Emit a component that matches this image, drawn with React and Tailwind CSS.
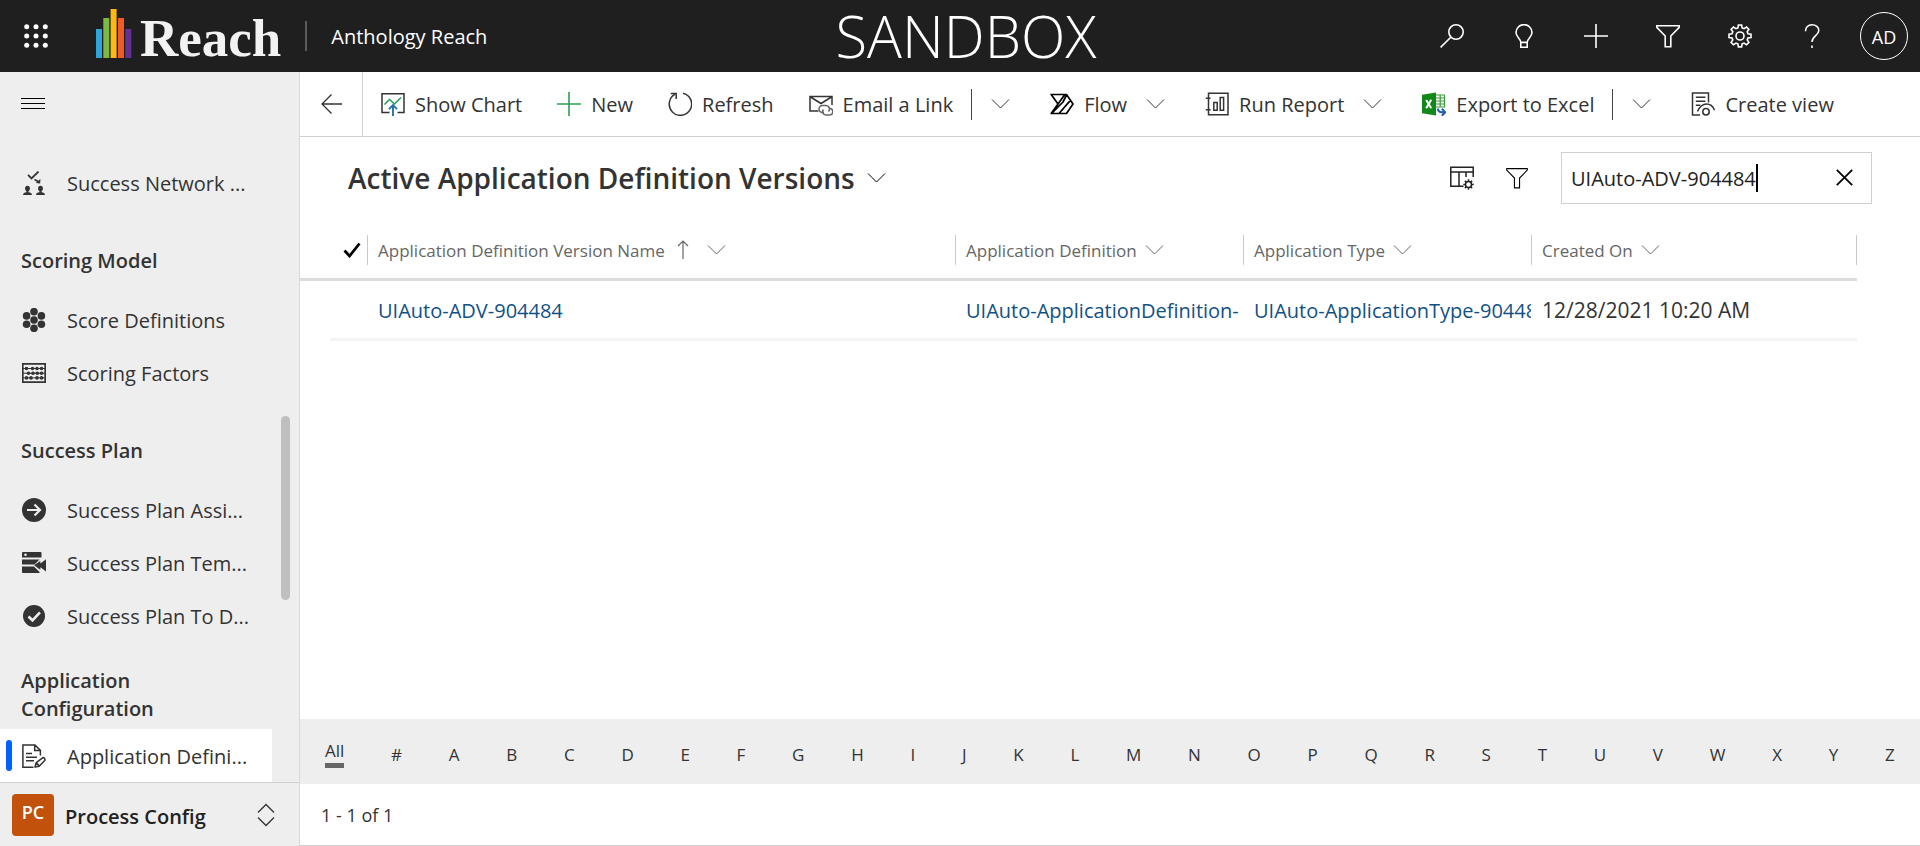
import React from "react";

function Svg({ children, size = 24, className = "", stroke = 1.5, vb = "0 0 24 24" }) {
  return (
    <svg
      width={size}
      height={size}
      viewBox={vb}
      fill="none"
      stroke="currentColor"
      strokeWidth={stroke}
      className={"shrink-0 " + className}
      aria-hidden="true"
    >
      {children}
    </svg>
  );
}

function Chevron({ className = "" }) {
  return (
    <svg width="19" height="12" viewBox="0 0 19 12" fill="none" stroke="currentColor" strokeWidth="1" className={"shrink-0 " + className} aria-hidden="true">
      <path d="M1 1.5 9.5 10 18 1.5" />
    </svg>
  );
}

/* ---------- header icons ---------- */
const SearchIcon = () => (
  <Svg stroke={1.6}>
    <circle cx="16" cy="8" r="7.2" />
    <path d="M10.8 13.2.6 23.4" />
  </Svg>
);
const BulbIcon = () => (
  <Svg stroke={1.6}>
    <path d="M8.8 18.4c0-3.600-4.800-5.400-4.800-9.800a8 8 0 0 1 16 0c0 4.400-4.800 6.200-4.800 9.800zM8.800 18.400v4.800h6.400v-4.800" />
  </Svg>
);
const PlusIcon = ({ className }) => (
  <Svg className={className} stroke={1.6}>
    <path d="M12 0v24M0 12h24" />
  </Svg>
);
const FunnelIcon = ({ size = 24, stroke = 1.6 }) => (
  <Svg size={size} stroke={stroke}>
    <path d="M.8 1.800h22.400v1.600L14.800 12v10.800H9.200V12L.8 3.400z" />
  </Svg>
);
const GearIcon = ({ size = 24, stroke = 1.6 }) => (
  <Svg size={size} stroke={stroke}>
    <circle cx="12" cy="12" r="4" />
    <path d="M10.400 1h3.200l.5 2.900 2 .8 2.400-1.700 2.400 2.300-1.700 2.400.8 2 3 .5v3.300l-3 .5-.8 2 1.700 2.400-2.400 2.400-2.400-1.700-2 .8-.5 3h-3.200l-.5-3-2-.8-2.400 1.700-2.400-2.400 1.700-2.400-.8-2-3-.5v-3.300l3-.5.8-2-1.700-2.400L5.500 3l2.400 1.700 2-.8z" />
  </Svg>
);
const HelpIcon = () => (
  <Svg stroke={1.6}>
    <path d="M5.500 7.200C5.500 3.300 8.200.8 12 .8s6.800 2.400 6.800 5.800c0 4.800-6.800 5.600-6.800 11.400M12 21.600V24" />
  </Svg>
);

/* ---------- command icons ---------- */
const ChartIcon = () => (
  <Svg>
    <path d="M8.500 20.500H1V1.800h22v18.700h-6.500" />
    <path d="m3.500 12.500 5-5 5 4.500 6.500-6.500" stroke="#1d9e52" />
    <path d="M12 24V13.500M8 17.200l4-4 4 4" stroke="#1f72a8" strokeWidth="1.9" />
  </Svg>
);
const RefreshIcon = () => (
  <Svg>
    <path d="M15 1.200A11.200 11.200 0 1 1 7.200 2.200" />
    <path d="M2.800 1.400h5.400V7" />
  </Svg>
);
const MailIcon = () => (
  <Svg>
    <path d="M9.500 19H1V4.500h22V13M1.500 5 12 11.500 22.500 5" />
    <g stroke="#666" strokeWidth="1.600">
      <path d="M15 20.500h-1.500a3.500 3.500 0 0 1 0-7H17a3.500 3.500 0 0 1 2.500 6" />
      <path d="M20 16.500h.6a3.200 3.200 0 0 1 0 6.500h-3.800a3.200 3.200 0 0 1-2.300-5.400" />
    </g>
  </Svg>
);
const FlowIcon = () => (
  <Svg stroke={1.7} className="text-black">
    <path d="M1.200 2.500h15.300L23 12l-6.500 9.500H1.200L8 12zM8 12l6.500-9M1.800 21.200 13 10l3.500-7M9.200 21.200 20.400 8.400" strokeLinejoin="round" />
  </Svg>
);
const ReportIcon = () => (
  <Svg>
    <path d="M3.500 4.500V1.200H23v21.600H3.500v-3.300M3.500 7.800v8.400M.8 6.200h4.800M.8 17.800h4.800M3.500 4.500v3.300M3.500 16.200v3.300" />
    <path d="M8.800 10.500h3.400v7.800H8.800zM15.200 5.500h3.400v12.800h-3.400z" />
  </Svg>
);
const ExcelIcon = () => (
  <Svg stroke={1.200}>
    <path d="M14 3h8.500v12H14" stroke="#3a9a3a" fill="#fff" />
    <path d="M14 6h8.500M14 9h8.500M14 12h8.500M18.200 3v12" stroke="#3a9a3a" />
    <path d="M0 2.800 14 .4v23.200L0 21.200z" fill="#12881a" stroke="none" />
    <path d="m4.200 8 5 8.200M9.200 7.800l-5 8.400" stroke="#fff" strokeWidth="2" />
    <path d="M16 16.500c0 2.800 1.500 3.800 4 3.800h2.800M19.800 16.800l3.400 3.500-3.400 3.500" stroke="#1f5fa8" strokeWidth="2" />
  </Svg>
);
const CreateViewIcon = () => (
  <Svg>
    <path d="M9 23H1.500V1h16v9.500M4.800 5.200h9.600M4.800 9.200h9.600M4.800 13.200h4.500" />
    <path d="M6.500 19.500C9 14 12.500 12 15.500 12c3.500 0 6.500 2 8 6.200" />
    <circle cx="15" cy="19.800" r="3.200" />
  </Svg>
);
const ColumnsIcon = () => (
  <Svg className="text-[#222]">
    <path d="M13.500 20.200H.8V1.200h22.400V11M.8 6h22.400M9 6v14M16 6v5" />
    <circle cx="18.500" cy="18.500" r="3" />
    <path d="M18.500 13.300v2.200M18.500 21.500v2.200M13.300 18.500h2.200M21.500 18.500h2.200M14.900 14.900l1.500 1.500M20.600 20.600l1.500 1.500M14.900 22.100l1.500-1.500M20.600 16.400l1.500-1.500" />
  </Svg>
);

/* ---------- navigation icons ---------- */
const NetworkIcon = () => (
  <Svg>
    <path d="m6 3.800 3.500 3.600L16.500.5" strokeWidth="1.800" />
    <path d="M12.500 8.500 17 11" />
    <g fill="currentColor" stroke="none">
      <path d="m18.400 8-.2 4.600-4.400-.6z" />
      <ellipse cx="5.500" cy="17.400" rx="2.400" ry="2.700" />
      <ellipse cx="18.500" cy="17.400" rx="2.400" ry="2.700" />
      <path d="M1 24c0-1.800 1.500-2.600 3.400-2.800V19h2.200v2.200C8.500 21.400 10 22.200 10 24zM14 24c0-1.800 1.500-2.600 3.400-2.800V19h2.200v2.200c1.900.2 3.400 1 3.400 2.800z" />
    </g>
  </Svg>
);
const HoneycombIcon = () => (
  <Svg>
    <g fill="currentColor" stroke="none">
      {[[12, 3.700], [12, 12], [12, 20.300], [4.600, 7.900], [19.400, 7.900], [4.600, 16.200], [19.400, 16.200]].map(([x, y]) => (
        <circle key={x + "-" + y} cx={x} cy={y} r="3.800" />
      ))}
    </g>
  </Svg>
);
const AbacusIcon = () => (
  <Svg>
    <path d="M1 7.500h22M1 12.200h22M1 16.900h22" strokeWidth="1" />
    <path d="M.8 2.800h22.400v18.400H.8z" strokeWidth="1.700" />
    <g fill="currentColor" stroke="none">
      {[[4.500, 7.500], [10.500, 7.500], [15, 7.500], [19.500, 7.500], [6.500, 12.200], [11, 12.200], [15.300, 12.200], [19.500, 12.200], [4.500, 16.900], [9, 16.900], [15, 16.900], [19.500, 16.900]].map(([x, y]) => (
        <circle key={x + "-" + y} cx={x} cy={y} r="1.800" />
      ))}
    </g>
  </Svg>
);
const ArrowCircleIcon = () => (
  <Svg>
    <circle cx="12" cy="12" r="12" fill="currentColor" stroke="none" />
    <path d="M5 12h13M12.500 6.500 18 12l-5.500 5.500" stroke="#eee" strokeWidth="2.200" />
  </Svg>
);
const TemplateIcon = () => (
  <Svg>
    <g fill="currentColor" stroke="none">
      <path d="M1 1h17.500q1 0 1 1v4.500H0V2q0-1 1-1z" />
      <path d="M0 8.500h17.500l-5 5H0zM0 15.500h12l5.500 5.500V22H1q-1 0-1-1z" />
      <path d="m24 8.200-5.500 4.200-.3-2.500-6 4.400 6 4.400.3-2.500 5.500 4.200z" />
      <circle cx="3.500" cy="3.800" r="1.300" fill="#eee" />
    </g>
  </Svg>
);
const CheckCircleIcon = () => (
  <Svg>
    <circle cx="12" cy="12" r="11" fill="currentColor" stroke="none" />
    <path d="m6.500 12.500 4 3.800 7.500-8" stroke="#eee" strokeWidth="2.600" />
  </Svg>
);
const DocEditIcon = () => (
  <Svg>
    <path d="M11.500 23.200H.9V.9h12l5.500 5.500v5.100M12.700 1v5.600h5.600M4 9.500h6M4 13.200h11M4 16.800h8" />
    <path d="m13 23 1.200-4.400 6.800-5q2 .2 2 2.600l-5.800 6zM14.500 18.800l2.700 3.200" strokeLinejoin="round" />
  </Svg>
);

const NAV = [
  { items: [{ label: "Success Network ...", Icon: NetworkIcon }] },
  {
    title: "Scoring Model",
    items: [
      { label: "Score Definitions", Icon: HoneycombIcon },
      { label: "Scoring Factors", Icon: AbacusIcon },
    ],
  },
  {
    title: "Success Plan",
    items: [
      { label: "Success Plan Assi...", Icon: ArrowCircleIcon },
      { label: "Success Plan Tem...", Icon: TemplateIcon },
      { label: "Success Plan To D...", Icon: CheckCircleIcon },
    ],
  },
  {
    title: "Application Configuration",
    items: [{ label: "Application Defini...", Icon: DocEditIcon, active: true }],
  },
];

const HEADER_ACTIONS = [
  ["Search", SearchIcon],
  ["Assistant", BulbIcon],
  ["Quick create", PlusIcon],
  ["Advanced find", FunnelIcon],
  ["Settings", GearIcon],
  ["Help", HelpIcon],
];

const LETTERS = ["All", "#", ..."ABCDEFGHIJKLMNOPQRSTUVWXYZ"];

function Header() {
  return (
    <header className="flex h-[72px] shrink-0 items-center bg-[#1f1f1f] text-white">
      <div className="flex flex-1 items-center">
        <button type="button" aria-label="App launcher" className="flex w-[72px] justify-center">
          <svg width="24" height="24" viewBox="0 0 24 24" fill="currentColor" aria-hidden="true">
            {[2.700, 12, 21.300].map((y) => [2.700, 12, 21.300].map((x) => <circle key={x + "-" + y} cx={x} cy={y} r="2.500" />))}
          </svg>
        </button>
        <a href="#home" className="ml-6 flex items-center gap-2">
          <svg width="36" height="50" viewBox="0 0 36 50" className="mb-1" aria-hidden="true">
            <rect x="0" y="20" width="6" height="29" fill="#2fa4d9" />
            <rect x="7.300" y="9" width="6" height="40" fill="#7cba43" />
            <rect x="14.600" y="0" width="6" height="49" fill="#fdb813" />
            <rect x="22" y="9" width="6" height="40" fill="#f05a28" />
            <rect x="29.300" y="20" width="6" height="29" fill="#66308f" />
          </svg>
          <span className="pt-1 font-['Liberation_Serif',serif] text-[53px] leading-[64px] font-bold text-[#f2f2f2]">Reach</span>
        </a>
        <span className="ml-6 h-[30px] w-0.5 bg-[#5c5c5c]" />
        <span className="ml-6 pt-0.5 text-[20px] leading-7">Anthology Reach</span>
      </div>
      <div className="pl-3 text-[58px] leading-[72px] font-light">SANDBOX</div>
      <div className="flex flex-1 items-center justify-end">
        {HEADER_ACTIONS.map(([label, Icon]) => (
          <button key={label} type="button" aria-label={label} className="flex h-[68px] w-[72px] items-center justify-center">
            <Icon />
          </button>
        ))}
        <button type="button" aria-label="Account" className="flex w-[72px] justify-center">
          <span className="flex size-12 items-center justify-center rounded-full border border-white pt-0.5 text-[18px] font-medium">AD</span>
        </button>
      </div>
    </header>
  );
}

function Sidebar() {
  return (
    <aside className="flex w-[300px] shrink-0 flex-col border-r border-[#d8d8d8] bg-[#eee] text-[#333]">
      <div className="flex h-[84px] shrink-0 items-start">
        <button type="button" aria-label="Toggle navigation" className="ml-[21px] mt-[26px] text-black">
          <svg width="24" height="12" viewBox="0 0 24 12" stroke="currentColor" strokeWidth="1" aria-hidden="true">
            <path d="M0 .5h24M0 5.500h24M0 10.500h24" />
          </svg>
        </button>
      </div>
      <nav className="relative min-h-0 flex-1 overflow-hidden">
        {NAV.map((group) => (
          <section key={group.title || "top"}>
            {group.title && (
              <h2 className="flex min-h-[84px] w-[220px] items-center pt-[25px] pb-1.5 pl-[21px] text-[20px] leading-7 font-semibold">{group.title}</h2>
            )}
            {group.items.map(({ label, Icon, active }) => (
              <a
                key={label}
                href="#nav"
                className={
                  active
                    ? "relative mr-[27px] flex h-[53px] items-center gap-[21px] bg-white pl-[22px] text-[20px]"
                    : "mr-[27px] flex h-[53px] items-center gap-[21px] pl-[22px] text-[20px]"
                }
              >
                {active && <span className="absolute left-1.5 h-[31px] w-1.5 rounded-sm bg-[#0062ff]" />}
                <Icon />
                <span className="pt-0.5 whitespace-nowrap">{label}</span>
              </a>
            ))}
          </section>
        ))}
        <div className="absolute top-[260px] right-[9px] h-[184px] w-[9px] rounded-full bg-[#bfbfbf]" />
      </nav>
      <button type="button" className="flex h-16 shrink-0 items-center border-t border-[#cfcfcf] pr-6 pl-3 text-left">
        <span className="flex size-[42px] items-center justify-center rounded bg-[#c2510c] pb-1 text-[18px] font-semibold text-white">PC</span>
        <span className="ml-[11px] flex-1 pt-1 text-[20px] font-semibold text-[#222]">Process Config</span>
        <svg width="18" height="24" viewBox="0 0 18 24" fill="none" stroke="currentColor" strokeWidth="1.300" aria-hidden="true">
          <path d="M1 9.500 9 1.500l8 8M1 14.500l8 8 8-8" />
        </svg>
      </button>
    </aside>
  );
}

function Command({ icon, label }) {
  return (
    <button type="button" className="flex items-center gap-2.5 whitespace-nowrap">
      {icon}
      <span className="pt-0.5">{label}</span>
    </button>
  );
}

function MenuChevron({ label }) {
  return (
    <button type="button" aria-label={label} className="mr-[5px] ml-[19px] flex">
      <Chevron />
    </button>
  );
}

function CommandBar() {
  return (
    <div className="flex h-[65px] shrink-0 items-stretch border-b border-[#d0d0d0] text-[20px] text-[#333]">
      <button type="button" aria-label="Back" className="flex w-[63px] shrink-0 items-center justify-center border-r border-[#d0d0d0]">
        <svg width="21" height="20" viewBox="0 0 21 20" fill="none" stroke="currentColor" strokeWidth="1.300" aria-hidden="true">
          <path d="M21 10H1M10.500.5 1 10l9.500 9.500" />
        </svg>
      </button>
      <div className="flex items-center gap-[35px] pl-[18px]">
        <Command icon={<ChartIcon />} label="Show Chart" />
        <Command icon={<PlusIcon className="text-[#2e9e55]" />} label="New" />
        <Command icon={<RefreshIcon />} label="Refresh" />
        <div className="flex items-center">
          <Command icon={<MailIcon />} label="Email a Link" />
          <span className="ml-[18px] h-[31px] w-px bg-[#444]" />
          <MenuChevron label="More email options" />
        </div>
        <div className="flex items-center">
          <Command icon={<FlowIcon />} label="Flow" />
          <MenuChevron label="Flow options" />
        </div>
        <div className="flex items-center">
          <Command icon={<ReportIcon />} label="Run Report" />
          <MenuChevron label="Report options" />
        </div>
        <div className="flex items-center">
          <Command icon={<ExcelIcon />} label="Export to Excel" />
          <span className="ml-[18px] h-[31px] w-px bg-[#444]" />
          <MenuChevron label="More export options" />
        </div>
        <Command icon={<CreateViewIcon />} label="Create view" />
      </div>
    </div>
  );
}

function ViewHeader() {
  return (
    <div className="flex h-[81px] shrink-0 items-center pr-12 pl-12">
      <button type="button" className="flex items-center gap-3">
        <h1 className="text-[28px] leading-10 font-semibold text-[#333]">Active Application Definition Versions</h1>
        <Chevron />
      </button>
      <div className="ml-auto flex items-center">
        <button type="button" aria-label="Edit columns" className="mr-8 flex">
          <ColumnsIcon />
        </button>
        <button type="button" aria-label="Edit filters" className="mr-[33px] flex">
          <FunnelIcon size={22} stroke={1.200} />
        </button>
        <div className="flex h-[52px] w-[311px] items-center border border-[#d0d0d0] pr-[18px] pl-[9px]">
          <input id="view-search" type="text" aria-label="Search this view" defaultValue="UIAuto-ADV-904484" className="field-sizing-content h-9 min-w-0 bg-transparent pt-0.5 text-[20px] text-[#222] outline-none" />
          <span className="h-7 w-0.5 bg-black" />
          <button type="button" aria-label="Clear search" className="ml-auto text-black">
            <svg width="17" height="17" viewBox="0 0 17 17" fill="none" stroke="currentColor" strokeWidth="1.800" aria-hidden="true">
              <path d="m.8.8 15.400 15.400M16.200.8.8 16.200" />
            </svg>
          </button>
        </div>
      </div>
    </div>
  );
}

function HeadCell({ label, sorted, last }) {
  return (
    <th scope="col" className="p-0 pt-1 text-left font-normal">
      <div className={"flex h-[30px] items-center border-l border-[#c8c8c8] pl-2.5 text-[17px] whitespace-nowrap text-[#666] " + (last ? "border-r" : "")}>
        <button type="button" className="flex items-center gap-2">
          <span className="pt-0.5">{label}</span>
          {sorted && (
            <svg width="12" height="19" viewBox="0 0 12 19" fill="none" stroke="currentColor" strokeWidth="1.200" className="mr-2.5 ml-1" aria-hidden="true">
              <path d="M6 19V1M1 6l5-5 5 5" />
            </svg>
          )}
          <Chevron />
        </button>
      </div>
    </th>
  );
}

function Grid() {
  return (
    <div className="min-h-0 flex-1 pr-[63px]">
      <table className="w-full table-fixed border-collapse">
        <colgroup>
          <col className="w-[30px]" />
          <col className="w-[37px]" />
          <col />
          <col className="w-72" />
          <col className="w-72" />
          <col className="w-[326px]" />
        </colgroup>
        <thead>
          <tr className="h-[61px] border-b-3 border-[#dcdcdc]">
            <th scope="col" colSpan={2} className="p-0 pt-1">
              <button type="button" aria-label="Select all" className="flex w-full justify-end pr-1.5 text-black">
                <svg width="18" height="16" viewBox="0 0 18 16" fill="none" stroke="currentColor" strokeWidth="2.800" aria-hidden="true">
                  <path d="m1.500 8.500 5 5.500L16.500 1.500" />
                </svg>
              </button>
            </th>
            <HeadCell label="Application Definition Version Name" sorted />
            <HeadCell label="Application Definition" />
            <HeadCell label="Application Type" />
            <HeadCell label="Created On" last />
          </tr>
        </thead>
        <tbody className="text-[20px]">
          <tr className="h-[60px]">
            <td />
            <td className="border-b-3 border-[#f3f3f3]" />
            <td className="overflow-hidden border-b-3 border-[#f3f3f3] p-0 pt-1 pl-[11px] whitespace-nowrap">
              <a href="#record" className="text-[#115187]">UIAuto-ADV-904484</a>
            </td>
            <td className="overflow-hidden border-b-3 border-[#f3f3f3] p-0 pt-1 pl-[11px] whitespace-nowrap">
              <a href="#definition" className="text-[#115187]">UIAuto-ApplicationDefinition-</a>
            </td>
            <td className="overflow-hidden border-b-3 border-[#f3f3f3] p-0 pt-1 pl-[11px] whitespace-nowrap">
              <a href="#type" className="text-[#115187]">UIAuto-ApplicationType-904484</a>
            </td>
            <td className="overflow-hidden border-b-3 border-[#f3f3f3] p-0 pt-1 pl-[11px] text-[21px] whitespace-nowrap text-[#333]">12/28/2021 10:20 AM</td>
          </tr>
        </tbody>
      </table>
    </div>
  );
}

function JumpBar() {
  return (
    <div className="flex h-[65px] shrink-0 items-center justify-between bg-[#eee] pr-[25px] pl-[25px] text-[17px] leading-6 text-[#333]">
      {LETTERS.map((l) => (
        <button key={l} type="button" className={l === "All" ? "mt-1 border-b-5 border-[#666]" : "pt-1.5"}>
          {l}
        </button>
      ))}
    </div>
  );
}

export default function App() {
  return (
    <div className="flex h-screen flex-col bg-white font-['Open_Sans','Noto_Sans',sans-serif]">
      <Header />
      <div className="flex min-h-0 flex-1">
        <Sidebar />
        <main className="flex min-w-0 flex-1 flex-col">
          <CommandBar />
          <ViewHeader />
          <Grid />
          <JumpBar />
          <footer className="flex h-[62px] shrink-0 items-center border-b border-[#d0d0d0] pt-0.5 pl-[21px] text-[18px] text-[#333]">1 - 1 of 1</footer>
        </main>
      </div>
    </div>
  );
}
